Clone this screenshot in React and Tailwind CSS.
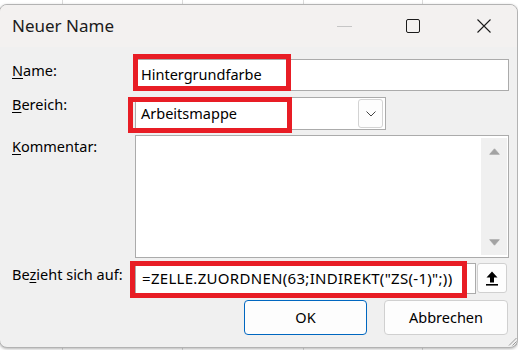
import React from "react";

function Label({ pre = "", u, post, className = "" }) {
  return (
    <div className={`w-[135px] shrink-0 pl-[12px] leading-[20px] text-black ${className}`}>
      {pre}
      <span className="underline underline-offset-[2px] decoration-[1px]">{u}</span>
      {post}
    </div>
  );
}

function UpIcon() {
  return (
    <svg width="12" height="15" viewBox="0 0 12 15">
      <path d="M6 0.5L11.5 6.5H8V11.5H4V6.5H0.5Z" fill="#000" />
      <rect x="0" y="13" width="12" height="1.6" fill="#000" />
    </svg>
  );
}

export default function App() {
  return (
    <div className="relative h-[350px] w-[518px] overflow-hidden bg-white font-['Noto_Sans',sans-serif] text-[14.5px]">
      {/* sheet behind the dialog */}
      <div className="absolute inset-0 flex">
        <div className="w-[63px] border-r border-[#dadada]" />
        <div className="w-[120px] border-r border-[#dadada]" />
        <div className="w-[121px] border-r border-[#dadada]" />
        <div className="w-[119px] border-r border-[#dadada]" />
      </div>

      <div className="relative pt-[4px]">
        <div className="ml-[-1px] flex h-[344px] w-[519px] flex-col overflow-hidden rounded-[8px] border border-[#b3b3b3] bg-[#f0f0f0] shadow-[0_1px_3px_rgba(0,0,0,0.3)]">
          {/* title bar */}
          <div className="flex h-[42px] shrink-0 items-center bg-[#f3f1f0]">
            <span className="pl-[12px] text-[17px] text-[#1b1b1b]">Neuer Name</span>
            <div className="ml-auto flex items-center pr-[26px]">
              <div className="h-px w-[15px] bg-[#c6c6c6]" />
              <div className="ml-[54px] h-[14px] w-[14px] rounded-[2px] border border-[#1b1b1b]" />
              <svg className="ml-[57px]" width="14" height="14" viewBox="0 0 14 14">
                <path d="M0.5 0.5L13.5 13.5M13.5 0.5L0.5 13.5" stroke="#1b1b1b" strokeWidth="1.1" />
              </svg>
            </div>
          </div>

          {/* body */}
          <div className="flex flex-1 flex-col pt-[12px]">
            <div className="flex h-[32px]">
              <Label u="N" post="ame:" className="pt-px" />
              <div className="flex h-[32px] w-[374px] items-center border border-[#ababab] bg-white pl-[5px] text-black">
                Hintergrundfarbe
              </div>
            </div>

            <div className="mt-[6px] flex h-[33px]">
              <Label u="B" post="ereich:" className="-mt-[3px]" />
              <div className="flex h-[33px] w-[251px] items-center border border-[#ababab] bg-white pl-[5px] text-black">
                Arbeitsmappe
                <div className="ml-auto mr-[2px] flex h-[29px] w-[25px] items-center justify-center rounded-[3px] border border-[#d3d3d3] bg-[#fdfdfd]">
                  <svg width="10" height="6" viewBox="0 0 10 6">
                    <path d="M0.5 0.5L5 5L9.5 0.5" fill="none" stroke="#444" strokeWidth="1" />
                  </svg>
                </div>
              </div>
            </div>

            <div className="mt-[5px] flex h-[123px]">
              <Label u="K" post="ommentar:" className="pt-px" />
              <div className="flex h-[123px] w-[374px] justify-end border border-[#ababab] bg-white py-[2px] pr-[1px]">
                <div className="flex w-[26px] flex-col items-center justify-between bg-[#f0f0f0] pb-[9px] pt-[10px]">
                  <svg width="11" height="7" viewBox="0 0 11 7">
                    <path d="M5.5 0.8L10.3 6.3H0.7Z" fill="#a3a3a3" stroke="#a3a3a3" strokeLinejoin="round" strokeWidth="0.8" />
                  </svg>
                  <svg width="11" height="7" viewBox="0 0 11 7">
                    <path d="M5.5 6.2L10.3 0.7H0.7Z" fill="#a3a3a3" stroke="#a3a3a3" strokeLinejoin="round" strokeWidth="0.8" />
                  </svg>
                </div>
              </div>
            </div>

            <div className="mt-[5px] flex h-[31px]">
              <Label pre="Be" u="z" post="ieht sich auf:" className="pt-px" />
              <div className="flex h-[31px] w-[341px] items-center border border-[#ababab] bg-white pl-[6px] text-[15px] tracking-[0.3px] text-black">
                =ZELLE.ZUORDNEN(63;INDIREKT("ZS(-1)";))
              </div>
              <div className="ml-px flex h-[30px] w-[30px] items-center justify-center rounded-[3px] border border-[#d0d0d0] bg-[#fdfdfd]">
                <UpIcon />
              </div>
            </div>

            <div className="mt-[6px] flex h-[35px] justify-end pr-[9px]">
              <button className="h-[35px] w-[123px] rounded-[4px] border border-[#0067c0] bg-[#fdfdfd] text-black">
                OK
              </button>
              <button className="ml-[17px] h-[35px] w-[124px] rounded-[4px] border border-[#d0d0d0] bg-[#fdfdfd] text-black">
                Abbrechen
              </button>
            </div>
          </div>
        </div>

        {/* resize grip */}
        <svg className="absolute bottom-[2px] right-[1px]" width="10" height="10" viewBox="0 0 10 10">
          <path d="M9.5 2L2 9.5M9.5 5.5L5.5 9.5M9.5 8.5L8.5 9.5" stroke="#9a9a9a" strokeWidth="1" />
        </svg>
      </div>

      {/* red highlight marks */}
      <div className="absolute left-[133px] top-[54px] h-[37px] w-[158px] border-[5px] border-[#e81d25]" />
      <div className="absolute left-[128px] top-[97px] h-[36px] w-[164px] border-[5px] border-[#e81d25]" />
      <div className="absolute left-[130px] top-[261px] h-[37px] w-[337px] border-[5px] border-[#e81d25]" />
    </div>
  );
}
